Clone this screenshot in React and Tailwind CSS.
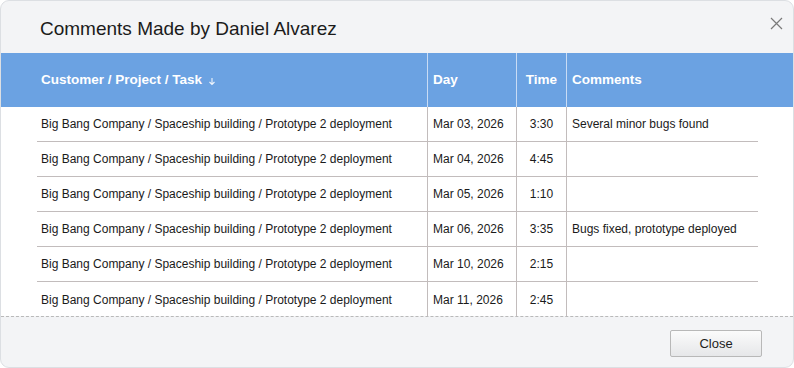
const rows = [
  { day: 'Mar 03, 2026', time: '3:30', comment: 'Several minor bugs found' },
  { day: 'Mar 04, 2026', time: '4:45', comment: '' },
  { day: 'Mar 05, 2026', time: '1:10', comment: '' },
  { day: 'Mar 06, 2026', time: '3:35', comment: 'Bugs fixed, prototype deployed' },
  { day: 'Mar 10, 2026', time: '2:15', comment: '' },
  { day: 'Mar 11, 2026', time: '2:45', comment: '' },
]

const task = 'Big Bang Company / Spaceship building / Prototype 2 deployment'

export default function App() {
  return (
    <div className="w-[794px] h-[368px] bg-white" style={{ fontFamily: '"Liberation Sans", Arial, sans-serif' }}>
      <div className="w-[794px] h-[368px] flex flex-col rounded-[9px] border border-[#dcdfe3] bg-[#f3f4f6] overflow-hidden">
        {/* title bar */}
        <div className="h-[52px] flex items-center justify-between pl-[39px] pr-[10px] shrink-0">
          <h1 className="text-[19px] text-[#1b1b1b] leading-none pt-[2px]">Comments Made by Daniel Alvarez</h1>
          <button className="w-[14px] h-[14px] mb-[7px] flex items-center justify-center">
            <svg width="13" height="13" viewBox="0 0 13 13">
              <path d="M1 1 L12 12 M12 1 L1 12" stroke="#7a7a7a" strokeWidth="1.2" />
            </svg>
          </button>
        </div>

        {/* table header */}
        <div className="h-[54px] shrink-0 grid grid-cols-[426px_89px_50px_1fr] bg-[#6ba2e2] text-white text-[13.5px] font-bold">
          <div className="flex items-center pl-[40px] gap-[6px] pt-[1px]">
            Customer / Project / Task
            <svg width="8" height="9" viewBox="0 0 8 9" className="mt-[1px]">
              <path d="M4 1 V7.5 M1.5 5 L4 7.5 L6.5 5" stroke="#eef4fc" strokeWidth="1.1" fill="none" />
            </svg>
          </div>
          <div className="flex items-center pl-[5px] pt-[1px] border-l border-[#c9dcf5]">Day</div>
          <div className="flex items-center justify-center pt-[1px] border-l border-[#c9dcf5]">Time</div>
          <div className="flex items-center pl-[5px] pt-[1px] border-l border-[#c9dcf5]">Comments</div>
        </div>

        {/* table body */}
        <div className="h-[209px] shrink-0 bg-white">
          {rows.map((r, i) => (
            <div
              key={i}
              className={
                'ml-[36px] w-[721px] h-[35px] grid grid-cols-[390px_89px_50px_1fr] text-[12px] text-[#1a1a1a] ' +
                (i < rows.length - 1 ? 'border-b border-[#c2bcbc]' : '')
              }
            >
              <div className="flex items-center pl-[4px]">{task}</div>
              <div className="flex items-center pl-[5px] border-l border-[#c2bcbc]">{r.day}</div>
              <div className="flex items-center justify-center border-l border-[#c2bcbc]">{r.time}</div>
              <div className="flex items-center pl-[5px] border-l border-[#c2bcbc]">{r.comment}</div>
            </div>
          ))}
        </div>

        {/* footer */}
        <div className="flex-1 border-t border-dashed border-[#b9b9b9] flex items-start justify-end pt-[13px] pr-[31px]">
          <button className="w-[92px] h-[27px] rounded-[2px] border border-[#b8b8b8] bg-gradient-to-b from-[#fbfbfb] to-[#e6e7e9] text-[13px] text-[#1e1e1e]">
            Close
          </button>
        </div>
      </div>
    </div>
  )
}
